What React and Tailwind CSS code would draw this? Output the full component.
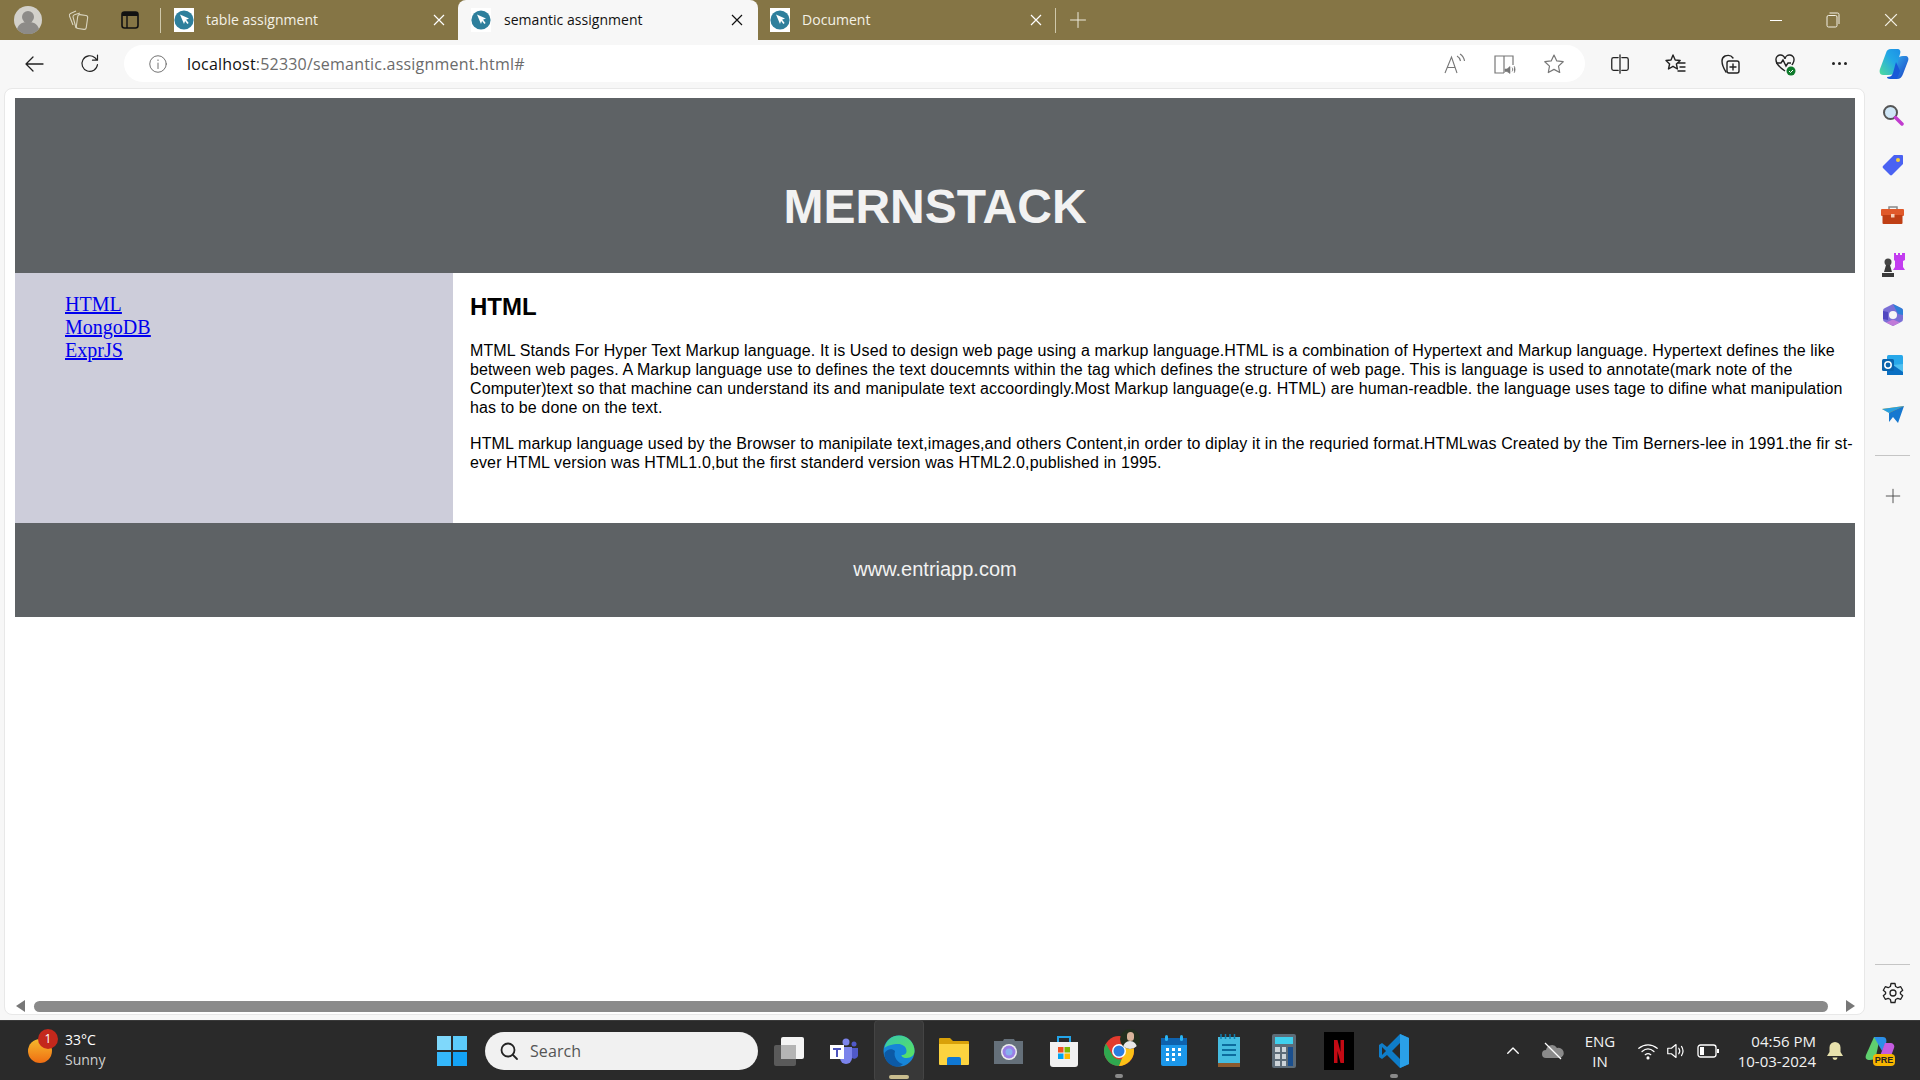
import React from "react";

const Fav = ({ className = "" }) => (
  <svg width="20" height="24" viewBox="0 0 20 24" className={className}>
    <rect width="20" height="24" fill="#fff" />
    <circle cx="10" cy="12" r="9.6" fill="#2e7f9c" />
    <path d="M6 6.5l9 4-3.6 1.4 -1.4 4.2z" fill="#fff" />
    <path d="M11 11.5l3 4" stroke="#fff" strokeWidth="1.5" />
  </svg>
);

const X = ({ c = "#fff", s = 12, w = 1.2 }) => (
  <svg width={s} height={s} viewBox="0 0 12 12"><path d="M1 1l10 10M11 1L1 11" stroke={c} strokeWidth={w} fill="none" /></svg>
);

const Line = ({ size = 24, children, stroke = "#222", w = 1.4 }) => (
  <svg width={size} height={size} viewBox="0 0 24 24" fill="none" stroke={stroke} strokeWidth={w} strokeLinecap="round" strokeLinejoin="round">{children}</svg>
);

const Tab = ({ title, active, closeColor }) => (
  <div className={`h-full flex items-center ${active ? "w-[300px] bg-[#f7f7f7] rounded-t-lg pl-[13px] text-[#111]" : "text-[#f4f1e6]"}`}>
    <Fav />
    <span className={`text-[14px] leading-[20px] pb-[1px] tracking-[0.03px] ${active ? "ml-[13px]" : "ml-3"}`}>{title}</span>
    <span className={`ml-auto flex ${active ? "mr-[15px]" : "mr-[1px]"}`}><X c={closeColor} /></span>
  </div>
);

const Slot = ({ w = 55, children }) => (
  <div className="h-full flex items-center justify-center shrink-0" style={{ width: w }}>{children}</div>
);

const SideIcon = ({ children }) => <div className="h-[50px] flex items-center justify-center">{children}</div>;

const Underline = ({ color }) => <div className="absolute bottom-[2px] left-1/2 -translate-x-1/2 h-[4px] rounded-full" style={{ width: color === "#c9bd8e" ? 20 : 8, background: color }} />;

export default function App() {
  return (
    <div className="w-[1920px] h-[1080px] overflow-hidden flex flex-col bg-[#f7f7f7] font-['Open_Sans',sans-serif]">
      {/* title bar */}
      <div className="h-[40px] bg-[#857545] flex items-center shrink-0">
        <div className="w-[56px] flex justify-center shrink-0">
          <svg width="28" height="28" viewBox="0 0 28 28"><circle cx="14" cy="14" r="14" fill="#d3d1cb" /><circle cx="14" cy="11" r="6" fill="#8d8b88" /><path d="M3 23c2-6 6-7 11-7s9 1 11 7a14 14 0 0 1-22 0z" fill="#8d8b88" /></svg>
        </div>
        <div className="w-[44px] flex justify-center shrink-0">
          <svg width="24" height="24" viewBox="0 0 24 24" fill="none" stroke="#d9d4bf" strokeWidth="1.1"><rect x="11" y="7" width="10" height="14" rx="2" transform="rotate(8 16 14)" /><path d="M10 20L7 9c0-1 .5-2 1.500-2.300L14 5" /><path d="M7 17L3.500 8c-.3-1 0-2 1-2.500L10 3" /></svg>
        </div>
        <div className="w-[60px] flex justify-center shrink-0">
          <svg width="18" height="18" viewBox="0 0 18 18"><rect x="1" y="1" width="16" height="16" rx="2.5" fill="#857545" stroke="#111" strokeWidth="1.6" /><rect x="1" y="1" width="16" height="4" fill="#111" /><path d="M6 5v12" stroke="#111" strokeWidth="1.4" /></svg>
        </div>
        <div className="w-px h-[25px] bg-[#cfc8ab] shrink-0" />
        <div className="w-[272px] h-full ml-[13px] mr-[12px] shrink-0"><Tab title="table assignment" closeColor="#fff" /></div>
        <div className="w-[300px] h-full shrink-0"><Tab title="semantic assignment" active closeColor="#111" /></div>
        <div className="w-[273px] h-full ml-[12px] shrink-0"><Tab title="Document" closeColor="#fff" /></div>
        <div className="w-px h-[25px] bg-[#cfc8ab] ml-[12px] shrink-0" />
        <div className="ml-[13px] flex"><Line size={18} stroke="#f1eee0" w={1.3}><path d="M12 2v20M2 12h20" /></Line></div>
        <div className="ml-auto flex items-center">
          <div className="w-[57px] flex justify-center"><div className="w-[12px] h-px bg-white" /></div>
          <div className="w-[58px] flex justify-center">
            <svg width="14" height="16" viewBox="0 0 14 16" fill="none" stroke="#f4f1e6" strokeWidth="1"><rect x="1" y="3.5" width="10" height="11.5" rx="1.5" /><path d="M3.5 1H11.5a1.5 1.5 0 0 1 1.5 1.5V12" /></svg>
          </div>
          <div className="w-[58px] flex justify-center"><X s={14} w={1.1} c="#f4f1e6" /></div>
        </div>
      </div>

      {/* toolbar */}
      <div className="h-[47px] shrink-0 flex items-start pt-[5px]">
        <div className="w-[124px] h-[37px] flex items-center shrink-0">
          <div className="w-[68px] flex justify-center"><Line size={24} w={1.3}><path d="M21 12H4M11 5l-7 7 7 7" /></Line></div>
          <div className="w-[44px] flex justify-center"><Line size={24} w={1.2}><path d="M19.500 12.500a7.800 7.800 0 1 1-2.600-6.800L19 8M19.500 3v5.200h-5" /></Line></div>
        </div>
        <div className="w-[1461px] h-[37px] bg-white rounded-full flex items-center shrink-0">
          <div className="ml-[23px] flex"><Line size={22} stroke="#666" w={1}><circle cx="12" cy="12" r="9" /><path d="M12 11v6M12 7.500v.8" /></Line></div>
          <div className="ml-[18px] text-[16px] tracking-[0.2px]"><span className="text-[#111]">localhost</span><span className="text-[#6b6b6b]">:52330/semantic.assignment.html#</span></div>
          <div className="ml-auto flex items-center mr-[19px] gap-[26px]">
            <svg width="24" height="24" viewBox="0 0 24 24" fill="none" stroke="#777" strokeWidth="1.1"><path d="M3 21L9.500 5 15 21M5.500 15.500h8M15 4c2 1 3 3 3.500 5M18 2c2.500 1.500 4 4 4.500 7" /></svg>
            <svg width="24" height="24" viewBox="0 0 24 24" fill="none" stroke="#777" strokeWidth="1.2"><path d="M12 4v17M12 4H3v17h9M12 4h9v9" /><path d="M13 17h2l3-2.500v7L15 19.500h-2zM20 15.500c1 1 1 3 0 4M22 14c1.500 2 1.500 5 0 7" fill="#777" strokeWidth="0.6" /></svg>
            <svg width="24" height="24" viewBox="0 0 24 24" fill="none" stroke="#777" strokeWidth="1.2" strokeLinejoin="round"><path d="M12 3l2.800 5.900 6.400.8-4.700 4.400 1.200 6.400-5.700-3.100-5.700 3.100 1.200-6.400L2.800 9.700l6.400-.8z" /></svg>
          </div>
        </div>
        <div className="h-[37px] flex items-center ml-[7px] shrink-0">
          <div className="w-[55px] flex justify-center"><Line size={22}><path d="M12 2v20M10 5H5a2 2 0 0 0-2 2v10a2 2 0 0 0 2 2h5M14 5h5a2 2 0 0 1 2 2v10a2 2 0 0 1-2 2h-5" /></Line></div>
          <div className="w-[55px] flex justify-center"><Line size={24}><path d="M10 3l2.200 5 5 .5-3.800 3.500 1 5-4.400-2.700-4.500 2.700 1.100-5L3 8.500l5-.5zM15 11h7M17 15h5M15 19h7" /></Line></div>
          <div className="w-[55px] flex justify-center"><Line size={24}><rect x="9" y="9" width="12" height="12" rx="2" /><path d="M15 12v6M12 15h6M8 20c-2-3-4-8-4-11 0-2 1-4 3-5 3-1 6-1 8 2" /></Line></div>
          <div className="w-[55px] flex justify-center">
            <svg width="24" height="24" viewBox="0 0 24 24" fill="none" stroke="#222" strokeWidth="1.4"><path d="M12 19C6 15 3 12 3 8a4.500 4.500 0 0 1 9-1 4.500 4.500 0 0 1 9 1c0 2-1 3-2 5" /><path d="M3 11h5l2-3 3 6 2-3h3" /><circle cx="18" cy="19" r="4.500" fill="#0f7b2c" stroke="none" /><path d="M16 19l1.500 1.500 2.500-2.500" stroke="#fff" strokeWidth="1" /></svg>
          </div>
          <div className="w-[55px] flex justify-center gap-[3px]">
            <i className="w-[3px] h-[3px] rounded-full bg-[#222]" /><i className="w-[3px] h-[3px] rounded-full bg-[#222]" /><i className="w-[3px] h-[3px] rounded-full bg-[#222]" />
          </div>
          <div className="w-[53px] flex justify-center">
            <svg width="30" height="32" viewBox="0 0 30 32"><defs><linearGradient id="cp1" x1="0" y1="1" x2="1" y2="0"><stop offset="0" stopColor="#4fdc9c" /><stop offset="0.6" stopColor="#22a6e6" /><stop offset="1" stopColor="#1c8fe6" /></linearGradient><linearGradient id="cp2" x1="0" y1="0" x2="1" y2="1"><stop offset="0" stopColor="#36b7f0" /><stop offset="1" stopColor="#1a3fc4" /></linearGradient></defs><path d="M24 8h2c3 0 4 2 3 5l-5 13c-1 3-3 5-6 5h-6l6-19c1-3 3-4 6-4z" fill="url(#cp2)" /><path d="M12 1h6c3 0 4 2 3 5l-5 18c-1 2-3 3-6 3H4c-3 0-4-3-3-6L7 5c1-3 2-4 5-4z" fill="url(#cp1)" /><path d="M17 14l4 9-3 8h-7c-2 0-3-1-3-2 3 0 5-1 6-4z" fill="#1859d8" /></svg>
          </div>
        </div>
      </div>

      {/* middle */}
      <div className="flex-1 flex min-h-0">
        <div className="ml-[4px] w-[1861px] h-[927px] mt-px bg-white rounded-lg border border-[#e8e8e8] flex flex-col pt-[9px] pl-[10px] text-black font-['Liberation_Sans',sans-serif] shrink-0">
          <div className="w-[1840px] h-[175px] bg-[#5e6265] flex items-center justify-center pt-[41px]">
            <h1 className="text-[48px] leading-[55px] font-bold text-[#f2f2f2]">MERNSTACK</h1>
          </div>
          <div className="w-[1840px] h-[250px] flex">
            <nav className="w-[438px] bg-[#cdcdda] pl-[50px] pt-[20px] flex flex-col items-start font-['Liberation_Serif',serif] text-[20px] leading-[23px] text-[#0000ee] underline">
              <a href="#">HTML</a>
              <a href="#">MongoDB</a>
              <a href="#">ExprJS</a>
            </nav>
            <main className="w-[1402px] pl-[17px] pt-[20px] text-[16px] leading-[19px]">
              <h2 className="text-[24px] leading-[28px] font-bold">HTML</h2>
              <p className="mt-[20px] tracking-[0.11px]">MTML Stands For Hyper Text Markup language. It is Used to design web page using a markup language.HTML is a combination of Hypertext and Markup language. Hypertext defines the like between web pages. A Markup language use to defines the text doucemnts within the tag which defines the structure of web page. This is language is used to annotate(mark note of the Computer)text so that machine can understand its and manipulate text accoordingly.Most Markup language(e.g. HTML) are human-readble. the language uses tage to difine what manipulation has to be done on the text.</p>
              <p className="mt-[17px] tracking-[0.11px]">HTML markup language used by the Browser to manipilate text,images,and others Content,in order to diplay it in the requried format.HTMLwas Created by the Tim Berners-lee in 1991.the fir st-ever HTML version was HTML1.0,but the first standerd version was HTML2.0,published in 1995.</p>
            </main>
          </div>
          <div className="w-[1840px] h-[94px] bg-[#5e6265] flex items-center justify-center pb-[2px]">
            <span className="text-[20px] text-[#f2f2f2]">www.entriapp.com</span>
          </div>
          <div className="mt-auto mb-[2px] -ml-[10px] h-[12px] flex items-center">
            <div className="w-[20px] flex justify-end"><i className="w-0 h-0 border-y-[6px] border-y-transparent border-r-[9px] border-r-[#777]" /></div>
            <div className="ml-[9px] w-[1794px] h-[11px] rounded-full bg-[#8a8a8a]" />
            <div className="ml-[18px]"><i className="block w-0 h-0 border-y-[6px] border-y-transparent border-l-[9px] border-l-[#777]" /></div>
          </div>
        </div>

        {/* edge sidebar */}
        <div className="w-[55px] flex flex-col items-center pt-[3px]">
          <SideIcon>
            <svg width="22" height="22" viewBox="0 0 22 22"><circle cx="8.500" cy="8.500" r="6.500" fill="#cfe6f6" stroke="#555" strokeWidth="2" /><path d="M13.500 13.500L20 20" stroke="#c13ccf" strokeWidth="3.500" strokeLinecap="round" /></svg>
          </SideIcon>
          <SideIcon>
            <svg width="24" height="24" viewBox="0 0 24 24"><path d="M2 13L13 2h8a1 1 0 0 1 1 1v8L11 22a1.500 1.500 0 0 1-2 0l-7-7a1.500 1.500 0 0 1 0-2z" fill="#4a62f2" /><circle cx="17" cy="7" r="2" fill="#f5cf3c" /></svg>
          </SideIcon>
          <SideIcon>
            <svg width="24" height="20" viewBox="0 0 24 20"><path d="M8 5V2h8v3" fill="none" stroke="#888" strokeWidth="1.500" /><rect y="4" width="23" height="7" rx="1" fill="#e0592a" /><rect x="1.500" y="10" width="20" height="9" rx="1" fill="#bf3f15" /><rect x="10" y="9" width="3.500" height="3.500" fill="#f7d0b8" /></svg>
          </SideIcon>
          <SideIcon>
            <svg width="24" height="24" viewBox="0 0 24 24"><path d="M13 0h2v2h2V0h2v2h2V0h3v7l-2 1v6l2 3H12l2-3V8l-1-1z" fill="#c33cf0" /><circle cx="7" cy="9" r="3.500" fill="#444" /><path d="M5 12h4l2 7H3zM1 20h12v4H1z" fill="#3a3a3a" /></svg>
          </SideIcon>
          <SideIcon>
            <svg width="22" height="24" viewBox="0 0 22 24"><path d="M11 1l8 4a3 3 0 0 1 2 3v8a3 3 0 0 1-2 3l-8 4-8-4a3 3 0 0 1-2-3V8a3 3 0 0 1 2-3z" fill="#7b6fd6" /><path d="M11 1l8 4a3 3 0 0 1 2 3v4l-5-1-2-4z" fill="#2e7fd8" /><path d="M1 8l5 1v8l-5-1z" fill="#5147c0" /><path d="M4 19.500l7 3.500 7-3.500-7-3z" fill="#c07ad8" /><circle cx="11" cy="12" r="4" fill="#f7f7f7" /></svg>
          </SideIcon>
          <SideIcon>
            <svg width="22" height="22" viewBox="0 0 22 22"><rect x="5" y="1" width="16" height="20" rx="1.500" fill="#28a8ea" /><path d="M5 11h16v10H5z" fill="#0a6fc2" /><path d="M11 11l10 7V10z" fill="#50c0f0" /><rect y="5" width="12" height="12" rx="1.500" fill="#0a64ad" /><circle cx="6" cy="11" r="3.200" fill="none" stroke="#fff" strokeWidth="1.500" /></svg>
          </SideIcon>
          <SideIcon>
            <svg width="22" height="18" viewBox="0 0 22 18"><path d="M0 3l22-3-10 9z" fill="#f4ac1c" /><path d="M0 3l7 4 15-7z" fill="#28a0e0" /><path d="M7 7l15-7-6 17-5-6-4 5z" fill="#1678d0" /></svg>
          </SideIcon>
          <div className="w-[35px] h-px bg-[#c5c5c5] mt-[15px]" />
          <div className="mt-[31px] flex"><Line size={18} stroke="#444" w={1.2}><path d="M12 3v18M3 12h18" /></Line></div>
          <div className="w-[35px] h-px bg-[#c5c5c5] mt-auto" />
          <div className="h-[55px] flex items-center">
            <Line size={24} stroke="#222" w={1.3}><circle cx="12" cy="12" r="3" /><path d="M10 2.500h4l.6 3 2.200 1.200 2.900-1 2 3.500-2.300 2v1.600l2.300 2-2 3.500-2.900-1-2.200 1.200-.6 3h-4l-.6-3-2.200-1.200-2.900 1-2-3.500 2.300-2v-1.600l-2.300-2 2-3.500 2.900 1 2.200-1.200z" /></Line>
          </div>
        </div>
      </div>

      {/* taskbar */}
      <div className="h-[60px] shrink-0 bg-[#2a2a2a] border-t border-[#3a3a3a] flex items-center text-white">
        <div className="w-[437px] flex items-center h-full shrink-0">
          <div className="relative ml-[28px] w-[24px] h-[24px]">
            <div className="w-[24px] h-[24px] rounded-full bg-gradient-to-b from-[#f4b92c] to-[#ee6c12]" />
            <div className="absolute -top-[10px] left-[10px] w-[20px] h-[20px] rounded-full bg-[#c4281c] flex items-center justify-center text-[12px] leading-none text-white">1</div>
          </div>
          <div className="ml-[13px] text-[14px] leading-[20px] pb-[2px]">
            <div>33°C</div>
            <div className="text-[#d0d0d0]">Sunny</div>
          </div>
        </div>
        <div className="grid grid-cols-2 gap-[2px] w-[30px] h-[30px] shrink-0">
          <i className="bg-[#7fd8fb]" /><i className="bg-[#5ccbfa]" /><i className="bg-[#35b8fb]" /><i className="bg-[#14a3f6]" />
        </div>
        <div className="ml-[18px] w-[273px] h-[38px] rounded-full bg-[#f1f1f1] flex items-center text-[#555] shrink-0">
          <div className="ml-[12px] flex"><Line size={24} stroke="#222" w={1.8}><circle cx="11" cy="11" r="6.500" /><path d="M16 16l4 4" /></Line></div>
          <span className="ml-[9px] text-[16px] tracking-[0.1px]">Search</span>
        </div>
        <div className="h-full flex ml-[3px]">
          <Slot>
            <svg width="32" height="32" viewBox="0 0 32 32"><rect x="1" y="10" width="22" height="21" rx="2" fill="#5a5a5a" /><rect x="8" y="2" width="23" height="22" rx="2" fill="#f4f4f4" /><rect x="8" y="10" width="15" height="14" fill="#b4b4b4" /></svg>
          </Slot>
          <Slot>
            <svg width="28" height="26" viewBox="0 0 28 26"><circle cx="16" cy="4" r="3.500" fill="#7b83eb" /><circle cx="24" cy="6" r="2.500" fill="#5059c9" /><path d="M10 9h12v11a5 5 0 0 1-12 0z" fill="#7b83eb" /><path d="M22 10h6v8a4 4 0 0 1-6 2z" fill="#5059c9" /><rect y="7" width="14" height="14" fill="#fff" /><path d="M3 10h8v2H8v7H6v-7H3z" fill="#4b53bc" /></svg>
          </Slot>
          <div className="relative w-[50px] h-[62px] mx-[2.500px] -mt-[1px] rounded bg-[#383838] border border-[#444] flex items-center justify-center shrink-0">
            <svg width="32" height="32" viewBox="0 0 32 32"><defs><linearGradient id="e1" x1="0" y1="0" x2="1" y2="1"><stop offset="0" stopColor="#37c8ab" /><stop offset="1" stopColor="#5be25f" /></linearGradient></defs><circle cx="16" cy="16" r="15.500" fill="#1685d8" /><path d="M1.500 13C3 5 9 .5 16 .5 25 .5 31.500 8 31.500 16c0 4-3 7-8 7-4 0-5-2-5-3 4 0 5-2 5-4 0-5-5-7-8-7-6 0-12 2-14 4z" fill="url(#e1)" /><path d="M12 16c-2 6 3 12 8 13-2 2-5 3-8 2.500 C5 30 1 24 1.500 18 4 14 9 13 12 16z" fill="#0c5aa6" /></svg>
            <Underline color="#c9bd8e" />
          </div>
          <Slot>
            <svg width="30" height="30" viewBox="0 0 30 30"><path d="M0 3a1 1 0 0 1 1-1h10l3 3h15a1 1 0 0 1 1 1v4H0z" fill="#d9a109" /><path d="M0 8h30v20a1 1 0 0 1-1 1H1a1 1 0 0 1-1-1z" fill="#fcd33f" /><path d="M8 29v-6a2 2 0 0 1 2-2h10a2 2 0 0 1 2 2v6z" fill="#0f78d4" /></svg>
          </Slot>
          <Slot>
            <svg width="30" height="26" viewBox="0 0 30 26"><path d="M7 3h2l1-2h10l1 2h8v23H0V3z" fill="#65707a" /><circle cx="15" cy="14" r="8" fill="#eee" /><circle cx="15" cy="14" r="6.500" fill="#9a7fe6" /><circle cx="15" cy="14" r="3.500" fill="#8ab0ee" /></svg>
          </Slot>
          <Slot>
            <svg width="28" height="32" viewBox="0 0 28 32"><path d="M8 7V2h12v5" fill="none" stroke="#23a4e8" strokeWidth="2" /><path d="M0 7h28v22a3 3 0 0 1-3 3H3a3 3 0 0 1-3-3z" fill="#f1f1f1" /><rect x="8" y="12" width="5.500" height="5.500" fill="#f25022" /><rect x="14.500" y="12" width="5.500" height="5.500" fill="#7fba00" /><rect x="8" y="18.500" width="5.500" height="5.500" fill="#00a4ef" /><rect x="14.500" y="18.500" width="5.500" height="5.500" fill="#ffb900" /></svg>
          </Slot>
          <Slot>
            <div className="relative h-full w-full flex items-center justify-center">
              <svg width="30" height="30" viewBox="0 0 30 30"><circle cx="15" cy="15" r="15" fill="#e33b2e" /><path d="M15 30A15 15 0 0 1 2 7.500L9 20c2 3 6 4 9 3z" fill="#2fa84f" /><path d="M15 30c8 0 15-7 15-15 0-2-.5-4-1-5H15l6 5z" fill="#fbc116" /><circle cx="15" cy="15" r="7" fill="#fff" /><circle cx="15" cy="15" r="5.500" fill="#2a7de1" /></svg>
              <div className="absolute top-[8px] left-[29px] w-[20px] h-[20px] rounded-full bg-[#24301f] overflow-hidden flex flex-col items-center"><div className="mt-[3px] w-[7px] h-[9px] rounded-full bg-[#d9b59a] shrink-0" /><div className="w-[14px] h-[8px] rounded-t-full bg-[#e8e8e8] shrink-0" /></div>
              <Underline color="#8a8a8a" />
            </div>
          </Slot>
          <Slot>
            <svg width="26" height="32" viewBox="0 0 26 32"><rect y="3" width="26" height="28" rx="2" fill="#1c97ea" /><rect y="3" width="26" height="7" fill="#0e62ae" /><rect x="4" y="0" width="3" height="6" rx="1.500" fill="#29b5f5" /><rect x="19" y="0" width="3" height="6" rx="1.500" fill="#29b5f5" /><path d="M5 13h3v3H5zM11 13h3v3h-3zM17 13h3v3h-3zM5 18h3v3H5zM11 18h3v3h-3zM17 18h3v3h-3zM5 23h3v3H5zM11 23h3v3h-3z" fill="#fff" /></svg>
          </Slot>
          <Slot>
            <svg width="22" height="34" viewBox="0 0 22 34"><rect y="3" width="22" height="28" fill="#45bce0" /><rect y="29" width="22" height="4" fill="#8c5a2e" /><path d="M3 0v5M7.500 0v5M12 0v5M16.500 0v5" stroke="#0e7fb0" strokeWidth="1.500" /><path d="M4 11h14M4 16h14M4 21h14" stroke="#0d6c9e" strokeWidth="2" /></svg>
          </Slot>
          <Slot>
            <svg width="24" height="34" viewBox="0 0 24 34"><rect width="24" height="34" rx="2" fill="#5d6c78" /><rect x="3" y="3" width="18" height="7" fill="#3fd0ee" /><path d="M3 13h5v5H3zM10 13h4v5h-4zM3 20h5v5H3zM10 20h4v5h-4zM3 27h5v5H3zM10 27h4v5h-4z" fill="#cdd4d9" /><rect x="16" y="13" width="5" height="19" fill="#1a4f8e" /></svg>
          </Slot>
          <Slot>
            <svg width="30" height="38" viewBox="0 0 30 38"><rect width="30" height="38" fill="#000" /><path d="M10 8h3.500l3 12V8H20v23h-3.500l-3-12v12H10z" fill="#c30a14" /></svg>
          </Slot>
          <Slot>
            <div className="relative h-full w-full flex items-center justify-center">
              <svg width="30" height="34" viewBox="0 0 30 34"><path d="M21 0l9 4v26l-9 4L8 21l-5 4-3-2v-12l3-2 5 4z" fill="#0f7dc9" /><path d="M21 0l9 4v26l-9 4z" fill="#2aa0e8" /><path d="M21 9v16l-8-8z" fill="#2a2a2a" /><path d="M3 13v8l4-4z" fill="#2a2a2a" /></svg>
              <Underline color="#8a8a8a" />
            </div>
          </Slot>
        </div>
        <div className="ml-auto flex items-center h-full shrink-0">
          <div className="flex"><Line size={18} stroke="#fff" w={1.8}><path d="M5 15l7-7 7 7" /></Line></div>
          <div className="ml-[19px] flex">
            <svg width="24" height="20" viewBox="0 0 24 20"><path d="M5 17a4 4 0 0 1 0-8 6 6 0 0 1 11-2 5 5 0 0 1 3 10z" fill="#8a8a8a" /><path d="M4 2l16 16" stroke="#fff" strokeWidth="1.300" /></svg>
          </div>
          <div className="ml-[20px] w-[30px] text-[15px] leading-[20px] text-center text-[#f2f2f2] flex flex-col items-center">
            <div>ENG</div>
            <div>IN</div>
          </div>
          <div className="ml-[22px] flex"><Line size={22} stroke="#fff" w={1.4}><path d="M2 9c6-5 14-5 20 0M5.500 12.500c4-3.500 9-3.500 13 0M9 16c2-1.500 4-1.500 6 0" /><circle cx="12" cy="19.500" r="1" fill="#fff" /></Line></div>
          <div className="ml-[6px] flex"><Line size={22} stroke="#fff" w={1.3}><path d="M3 9v6h4l5 4V5L7 9zM15 9c1.500 2 1.500 4 0 6M18 7c2 3 2 7 0 10" /></Line></div>
          <div className="ml-[10px] flex">
            <svg width="22" height="14" viewBox="0 0 22 14"><rect x="1" y="1" width="18" height="12" rx="2.500" fill="none" stroke="#fff" strokeWidth="1.300" /><rect x="3" y="3" width="4" height="8" fill="#fff" /><rect x="20" y="5" width="2" height="4" fill="#fff" /></svg>
          </div>
          <div className="ml-[7px] w-[90px] text-right text-[15px] leading-[20px] text-[#f2f2f2] whitespace-nowrap">
            <div>04:56 PM</div>
            <div>10-03-2024</div>
          </div>
          <div className="ml-[10px] flex">
            <svg width="18" height="20" viewBox="0 0 18 20"><path d="M9 1a5.500 5.500 0 0 1 5.500 5.500V11L17 15H1l2.500-4V6.500A5.500 5.500 0 0 1 9 1z" fill="#e8e2ad" /><path d="M6.500 16.500h5a2.500 2.500 0 0 1-5 0z" fill="#e8e2ad" /></svg>
          </div>
          <div className="ml-[21px] mr-[25px] relative w-[30px] h-[30px]">
            <svg width="30" height="28" viewBox="0 0 30 28"><path d="M9 1h6l-4 19c-1 3-3 4-6 4-4 0-5-2-4-5z" fill="#5fcf6e" /><path d="M9 1h9c3 0 4 3 3 6l-4 8z" fill="#2b8fe8" /><path d="M20 7h5c3 0 5 2 4 5l-3 8H15z" fill="#c55ce0" /></svg>
            <div className="absolute left-[8px] bottom-0 w-[22px] h-[12px] rounded-sm bg-[#f7b500] text-[9px] leading-[12px] text-center font-bold text-[#222] font-['Liberation_Sans',sans-serif]">PRE</div>
          </div>
        </div>
      </div>
    </div>
  );
}
